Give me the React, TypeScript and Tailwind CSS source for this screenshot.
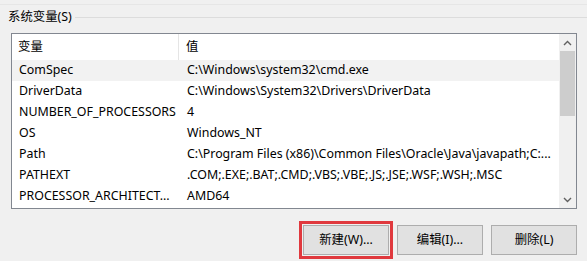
import React from "react";

const rows: [string, string][] = [
  ["ComSpec", "C:\\Windows\\system32\\cmd.exe"],
  ["DriverData", "C:\\Windows\\System32\\Drivers\\DriverData"],
  ["NUMBER_OF_PROCESSORS", "4"],
  ["OS", "Windows_NT"],
  ["Path", "C:\\Program Files (x86)\\Common Files\\Oracle\\Java\\javapath;C:..."],
  ["PATHEXT", ".COM;.EXE;.BAT;.CMD;.VBS;.VBE;.JS;.JSE;.WSF;.WSH;.MSC"],
  ["PROCESSOR_ARCHITECT...", "AMD64"],
];

const font = {
  fontFamily: '"Noto Sans", "Noto Sans CJK SC", sans-serif',
};

function Chevron({ up }: { up?: boolean }) {
  return (
    <svg width="9" height="6" viewBox="0 0 9 6">
      <path
        d={up ? "M1 5 L4.5 1.5 L8 5" : "M1 1 L4.5 4.5 L8 1"}
        fill="none"
        stroke="#606060"
        strokeWidth="1.4"
      />
    </svg>
  );
}

export default function App() {
  return (
    <div
      className="w-[587px] h-[261px] bg-[#f0f0f0] overflow-hidden text-[12.4px] text-black flex flex-col"
      style={font}
    >
      <div className="h-px bg-[#e6e6e6] mt-[4px]" />
      <div className="flex items-center h-[18px] mt-[3px]">
        <span className="ml-[8px] leading-none">系统变量(S)</span>
        <div className="flex-1 h-px bg-[#dcdcdc] ml-[3px]" />
      </div>
      <div className="ml-[11px] mt-[7px] w-[566px] h-[176px] border border-[#828790] bg-white flex">
        <div className="flex-1 flex flex-col">
          <div className="flex h-[26px] items-center">
            <div className="w-[167px] h-full flex items-center pl-[6px] border-r border-[#e5e5e5]">
              变量
            </div>
            <div className="flex-1 pl-[7px]">值</div>
          </div>
          {rows.map(([k, v], i) => (
            <div
              key={k}
              className={`flex h-[21px] items-center whitespace-nowrap ${
                i === 0 ? "bg-[#f2f2f2]" : ""
              }`}
            >
              <div className="w-[168px] pl-[7px] overflow-hidden">{k}</div>
              <div className="flex-1 pl-[7px] overflow-hidden">{v}</div>
            </div>
          ))}
        </div>
        <div className="w-[17px] bg-[#f0f0f0] flex flex-col items-center">
          <div className="h-[17px] flex items-center justify-center">
            <Chevron up />
          </div>
          <div className="w-[15px] h-[65px] bg-[#cdcdcd]" />
          <div className="flex-1" />
          <div className="h-[17px] flex items-center justify-center">
            <Chevron />
          </div>
        </div>
      </div>
      <div className="flex justify-end gap-2 mt-[16px] mr-[10px]">
        <button className="w-[86px] h-[30px] bg-[#e1e1e1] border border-[#adadad] outline-[3px] outline-solid outline-[#e0393e] outline-offset-[1px]">
          新建(W)...
        </button>
        <button className="w-[86px] h-[30px] bg-[#e1e1e1] border border-[#adadad]">
          编辑(I)...
        </button>
        <button className="w-[86px] h-[30px] bg-[#e1e1e1] border border-[#adadad]">
          删除(L)
        </button>
      </div>
    </div>
  );
}
